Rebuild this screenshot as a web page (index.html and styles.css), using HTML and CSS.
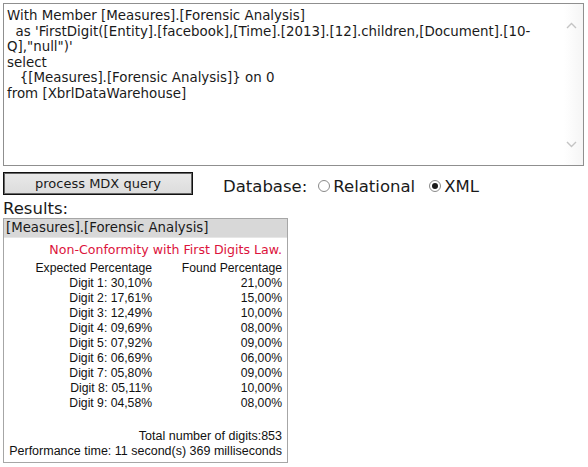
FILE: index.html
```html
<!DOCTYPE html>
<html lang="en">
<head>
<meta charset="utf-8">
<title>MDX query</title>
<link rel="stylesheet" href="styles.css">
</head>
<body>
<div class="page">
  <div class="editor">
    <div class="query">With Member [Measures].[Forensic Analysis]
  as 'FirstDigit([Entity].[facebook],[Time].[2013].[12].children,[Document].[10-
Q],"null")'
select
   {[Measures].[Forensic Analysis]} on 0
from [XbrlDataWarehouse]</div>
    <div class="scrollbar">
      <svg class="chev" width="11" height="7" viewBox="0 0 11 7"><path d="M1 6 L5.5 1.5 L10 6" fill="none" stroke="#c4c4c4" stroke-width="1.4"/></svg>
      <svg class="chev" width="11" height="7" viewBox="0 0 11 7"><path d="M1 1 L5.5 5.5 L10 1" fill="none" stroke="#c4c4c4" stroke-width="1.4"/></svg>
    </div>
  </div>

  <div class="controls">
    <button class="run" type="button">process MDX query</button>
    <div class="db">
      <span class="db-label">Database:</span>
      <label class="opt"><input class="radio" type="radio" name="db">Relational</label>
      <label class="opt"><input class="radio" type="radio" name="db" checked>XML</label>
    </div>
  </div>

  <div class="results-title">Results:</div>

  <div class="result">
    <div class="result-head">[Measures].[Forensic Analysis]</div>
    <div class="result-body">
      <div class="warn">Non-Conformity with First Digits Law.</div>
      <div class="grid">
        <div>Expected Percentage</div><div>Found Percentage</div>
        <div>Digit 1: 30,10%</div><div>21,00%</div>
        <div>Digit 2: 17,61%</div><div>15,00%</div>
        <div>Digit 3: 12,49%</div><div>10,00%</div>
        <div>Digit 4: 09,69%</div><div>08,00%</div>
        <div>Digit 5: 07,92%</div><div>09,00%</div>
        <div>Digit 6: 06,69%</div><div>06,00%</div>
        <div>Digit 7: 05,80%</div><div>09,00%</div>
        <div>Digit 8: 05,11%</div><div>10,00%</div>
        <div>Digit 9: 04,58%</div><div>08,00%</div>
      </div>
      <div class="summary">
        <div>Total number of digits:853</div>
        <div>Performance time: 11 second(s) 369 milliseconds</div>
      </div>
    </div>
  </div>
</div>
</body>
</html>
```

FILE: styles.css
```css
html, body {
  margin: 0;
  padding: 0;
  background: #ffffff;
}

.page {
  padding: 3px 4px 0 3px;
  font-family: "DejaVu Sans", Verdana, sans-serif;
  color: #1a1a1a;
}

.editor {
  display: flex;
  height: 161px;
  border: 1px solid #8f8f8f;
  background: #ffffff;
}

.query {
  flex: 1;
  padding: 4px 0 0 3px;
  font-size: 13.4px;
  line-height: 15.5px;
  white-space: pre;
  overflow: hidden;
}

.scrollbar {
  width: 19px;
  display: flex;
  flex-direction: column;
  justify-content: space-between;
  align-items: center;
  padding: 18px 0 17px;
  background: linear-gradient(to right, #ffffff, #f5f5f5);
}

.chev {
  display: block;
  margin-right: 4px;
}

.controls {
  display: flex;
  align-items: center;
  margin-top: 6px;
  height: 23px;
}

.run {
  width: 190px;
  height: 23px;
  margin: 0;
  padding: 0;
  font-family: "DejaVu Sans", Verdana, sans-serif;
  font-size: 13px;
  color: #1a1a1a;
  background: linear-gradient(#e9e9e9, #dcdcdc);
  border: 1px solid #111111;
  box-shadow: inset 0 0 0 1px #666666;
}

.db {
  display: flex;
  align-items: center;
  margin-left: 30px;
  margin-top: 5px;
  font-size: 16.5px;
  color: #1a1a1a;
}

.db-label {
  margin-right: 11px;
}

.opt {
  display: flex;
  align-items: center;
  margin-right: 14px;
}

.radio {
  appearance: none;
  -webkit-appearance: none;
  width: 12px;
  height: 12px;
  margin: 0 3px 0 0;
  border: 1px solid #8a8a8a;
  border-radius: 50%;
  background: #ffffff;
  display: grid;
  place-items: center;
  box-sizing: border-box;
}

.radio:checked::after {
  content: "";
  width: 6px;
  height: 6px;
  border-radius: 50%;
  background: #1a1a1a;
}

.results-title {
  margin-top: 4px;
  font-size: 16.5px;
  line-height: 19px;
}

.result {
  border: 1px solid #a6a6a6;
  box-sizing: border-box;
  width: 285px;
}

.result-head {
  background: #d8d8d8;
  font-size: 13.3px;
  line-height: 18px;
  padding-left: 2px;
  border-bottom: 1px solid #e6e6e6;
}

.result-body {
  padding: 4px 5px 3px 4px;
  font-family: "Liberation Sans", Arial, sans-serif;
  font-size: 12.2px;
  color: #111111;
  line-height: 15px;
  text-align: right;
}

.warn {
  font-family: "DejaVu Sans", Verdana, sans-serif;
  color: #dc143c;
  font-size: 12.6px;
  line-height: 15px;
  margin-bottom: 4px;
}

.grid {
  display: grid;
  grid-template-columns: 144px 130px;
  grid-auto-rows: 15px;
}

.summary {
  margin-top: 18px;
  font-size: 12.5px;
}
```
